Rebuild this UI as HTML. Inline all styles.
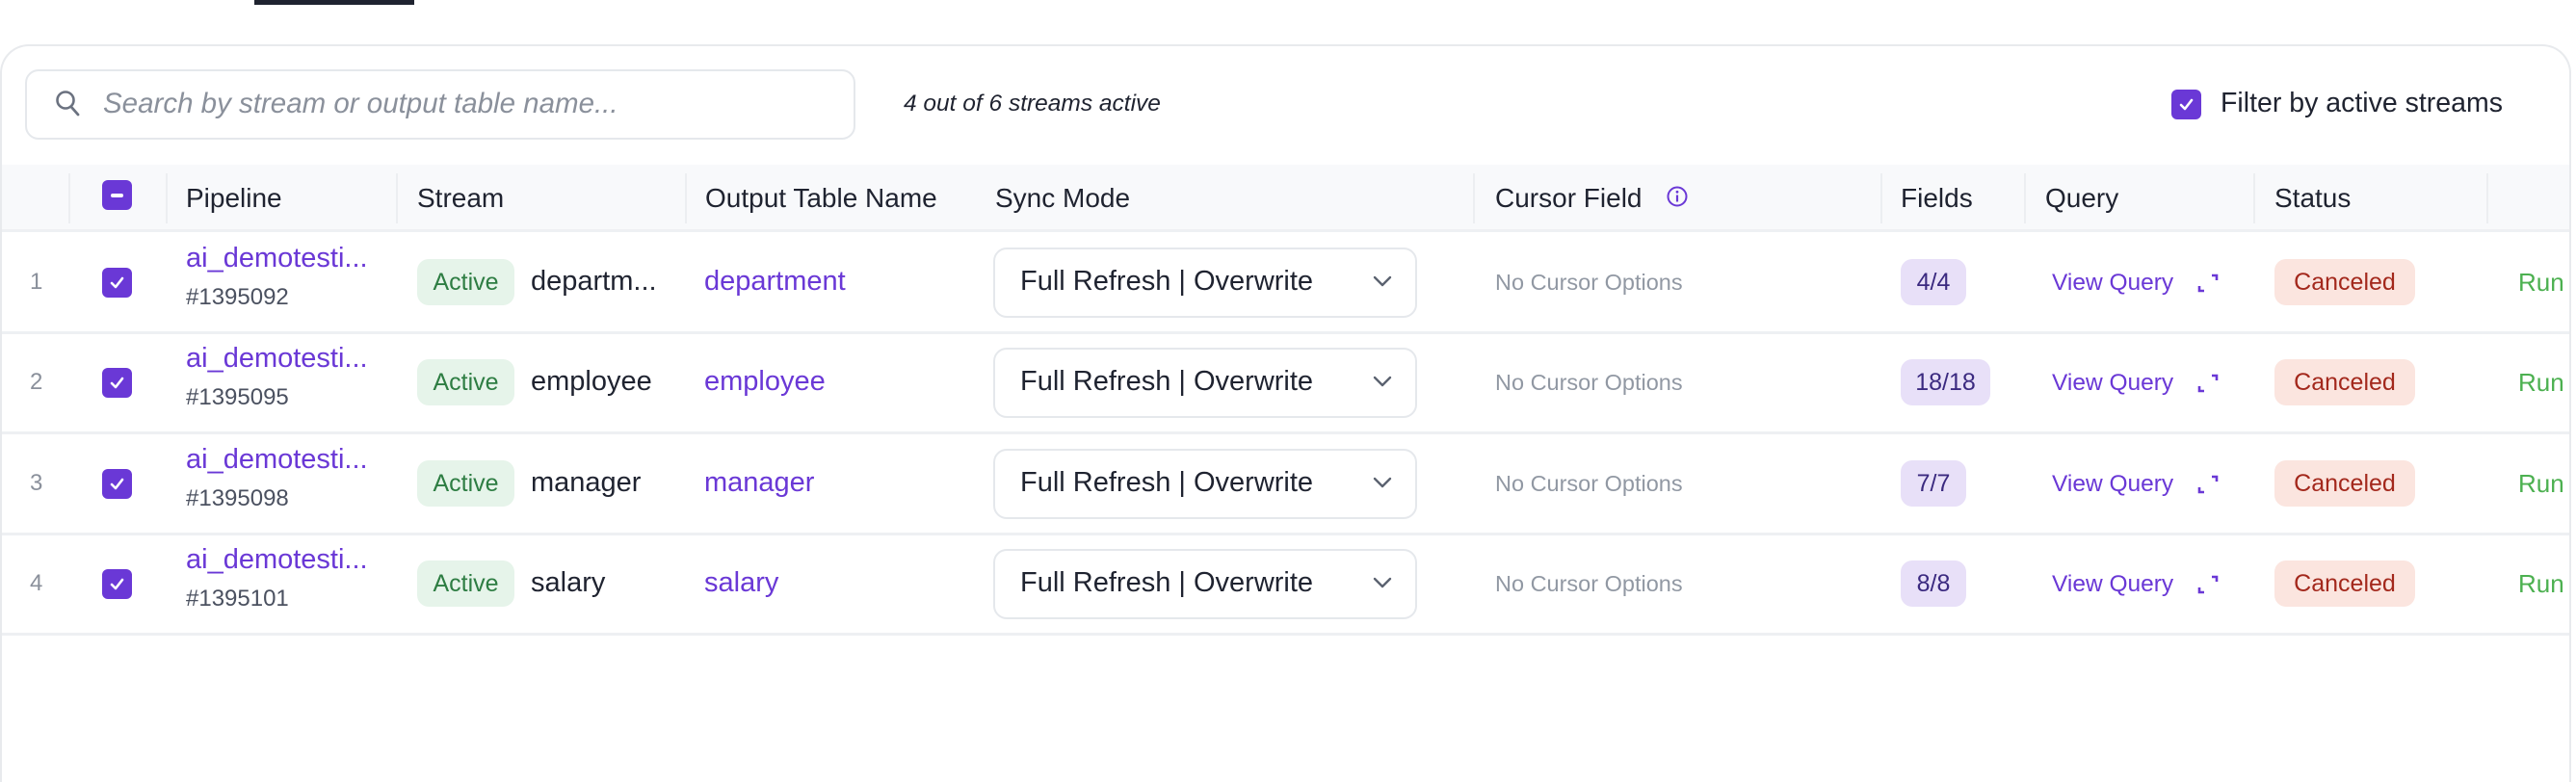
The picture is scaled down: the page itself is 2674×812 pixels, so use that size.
<!DOCTYPE html>
<html><head><meta charset="utf-8">
<style>
*{box-sizing:border-box;margin:0;padding:0}
html,body{width:2674px;height:812px;overflow:hidden}
body{background:#fff;font-family:"Liberation Sans",sans-serif;color:#1f2330;position:relative}
.a{position:absolute;white-space:nowrap}
.card{position:absolute;left:0;top:46px;width:2669px;height:766px;border:2px solid #e8eaed;border-bottom:none;border-radius:30px 30px 0 0;background:#fff}
.search{left:26px;top:72px;width:862px;height:73px;border:2px solid #e5e8ec;border-radius:14px}
.hdr{left:2px;top:171px;width:2665px;height:70px;background:#f8f9fb;border-bottom:3px solid #eef0f3}
.ht{font-size:28px;color:#1f2330;top:190px}
.div{top:180px;width:2px;height:52px;background:#eceef1}
.rowline{left:2px;width:2665px;height:3px;background:#eef0f3}
.cb{width:31px;height:31px;background:#6a38d6;border-radius:6px}
.badge{height:48px;border-radius:12px;font-size:25px;line-height:48px;text-align:center}
.sel{width:440px;height:73px;border:2px solid #e5e8ec;border-radius:14px}
</style></head><body>
<div class="a" style="left:264px;top:0;width:166px;height:5px;background:#1f2330"></div>
<div class="card"></div>
<div class="a search"></div>
<svg class="a" style="left:56px;top:92px" width="30" height="32" viewBox="0 0 30 32"><circle cx="12" cy="12" r="8.5" fill="none" stroke="#6b7280" stroke-width="2.6"/><path d="M18 19l7 8" stroke="#6b7280" stroke-width="2.8" stroke-linecap="round"/></svg>
<div class="a" style="left:107px;top:91px;font-size:29.5px;font-style:italic;color:#8a909b">Search by stream or output table name...</div>
<div class="a" style="left:938px;top:94px;font-size:24.5px;font-style:italic;color:#1f2330">4 out of 6 streams active</div>
<div class="a cb" style="left:2254px;top:93px"></div>
<svg class="a" style="left:2254px;top:93px" width="31" height="31"><path d="M10 16l4 4 7-9" fill="none" stroke="#fff" stroke-width="2.6" stroke-linecap="round" stroke-linejoin="round"/></svg>
<div class="a" style="left:2305px;top:91px;font-size:28.5px;color:#1f2330">Filter by active streams</div>

<div class="a hdr"></div>
<div class="a div" style="left:71px"></div>
<div class="a div" style="left:172px"></div>
<div class="a div" style="left:411px"></div>
<div class="a div" style="left:711px"></div>
<div class="a div" style="left:1529px"></div>
<div class="a div" style="left:1952px"></div>
<div class="a div" style="left:2101px"></div>
<div class="a div" style="left:2339px"></div>
<div class="a div" style="left:2581px"></div>
<div class="a cb" style="left:106px;top:187px"></div>
<div class="a" style="left:115px;top:201px;width:13px;height:4px;background:#fff;border-radius:2px"></div>
<div class="a ht" style="left:193px">Pipeline</div>
<div class="a ht" style="left:433px">Stream</div>
<div class="a ht" style="left:732px">Output Table Name</div>
<div class="a ht" style="left:1033px">Sync Mode</div>
<div class="a ht" style="left:1552px">Cursor Field</div>
<svg class="a" style="left:1729px;top:192px" width="24" height="24"><circle cx="12" cy="12" r="9.5" fill="none" stroke="#6a38d6" stroke-width="2"/><path d="M12 10.5v7" stroke="#6a38d6" stroke-width="2.2"/><circle cx="12" cy="7.3" r="1.4" fill="#6a38d6"/></svg>
<div class="a ht" style="left:1973px">Fields</div>
<div class="a ht" style="left:2123px">Query</div>
<div class="a ht" style="left:2361px">Status</div>

<div id="rows"></div>
<script>
var data=[["1","#1395092","departm...","department","4/4",68],["2","#1395095","employee","employee","18/18",93],["3","#1395098","manager","manager","7/7",68],["4","#1395101","salary","salary","8/8",68]];
var h="";
data.forEach(function(d,i){
var t=241+i*104.3, c=t+52;
h+='<div class="a" style="left:31px;top:'+(c-14)+'px;font-size:24px;color:#8a909b">'+d[0]+'</div>';
h+='<div class="a cb" style="left:106px;top:'+(c-15)+'px"></div><svg class="a" style="left:106px;top:'+(c-15)+'px" width="31" height="31"><path d="M10 16l4 4 7-9" fill="none" stroke="#fff" stroke-width="2.6" stroke-linecap="round" stroke-linejoin="round"/></svg>';
h+='<div class="a" style="left:193px;top:'+(c-41)+'px;font-size:29px;color:#6a38d6">ai_demotesti...</div>';
h+='<div class="a" style="left:193px;top:'+(c+2)+'px;font-size:24px;color:#4b5160">'+d[1]+'</div>';
h+='<div class="a badge" style="left:433px;top:'+(c-24)+'px;width:101px;background:#e6f4ea;color:#2e7d43">Active</div>';
h+='<div class="a" style="left:551px;top:'+(c-17)+'px;font-size:29px;color:#1f2330">'+d[2]+'</div>';
h+='<div class="a" style="left:731px;top:'+(c-17)+'px;font-size:29px;color:#6a38d6">'+d[3]+'</div>';
h+='<div class="a sel" style="left:1031px;top:'+(c-36)+'px"></div>';
h+='<div class="a" style="left:1059px;top:'+(c-17)+'px;font-size:29px;color:#1f2330">Full Refresh | Overwrite</div>';
h+='<svg class="a" style="left:1424px;top:'+(c-8)+'px" width="22" height="14"><path d="M3 3l8 8 8-8" fill="none" stroke="#5b6270" stroke-width="2.4" stroke-linecap="round" stroke-linejoin="round"/></svg>';
h+='<div class="a" style="left:1552px;top:'+(c-13)+'px;font-size:23.5px;color:#9198a3">No Cursor Options</div>';
h+='<div class="a badge" style="left:1973px;top:'+(c-24)+'px;width:'+d[5]+'px;background:#e8e0f8;color:#3b2a80">'+d[4]+'</div>';
h+='<div class="a" style="left:2130px;top:'+(c-13)+'px;font-size:24.5px;color:#6a38d6">View Query</div>';
h+='<svg class="a" style="left:2280px;top:'+(c-10)+'px" width="24" height="22"><path d="M16 3h5v5M3 14v5h5" fill="none" stroke="#6a38d6" stroke-width="2.6"/></svg>';
h+='<div class="a badge" style="left:2361px;top:'+(c-24)+'px;width:146px;background:#fbe5df;color:#a3281c">Canceled</div>';
h+='<div class="a" style="left:2614px;top:'+(c-15)+'px;font-size:26px;color:#4cb050">Run</div>';
h+='<div class="a rowline" style="top:'+(t+103)+'px"></div>';
});
document.getElementById("rows").innerHTML=h;
</script>
</body></html>
